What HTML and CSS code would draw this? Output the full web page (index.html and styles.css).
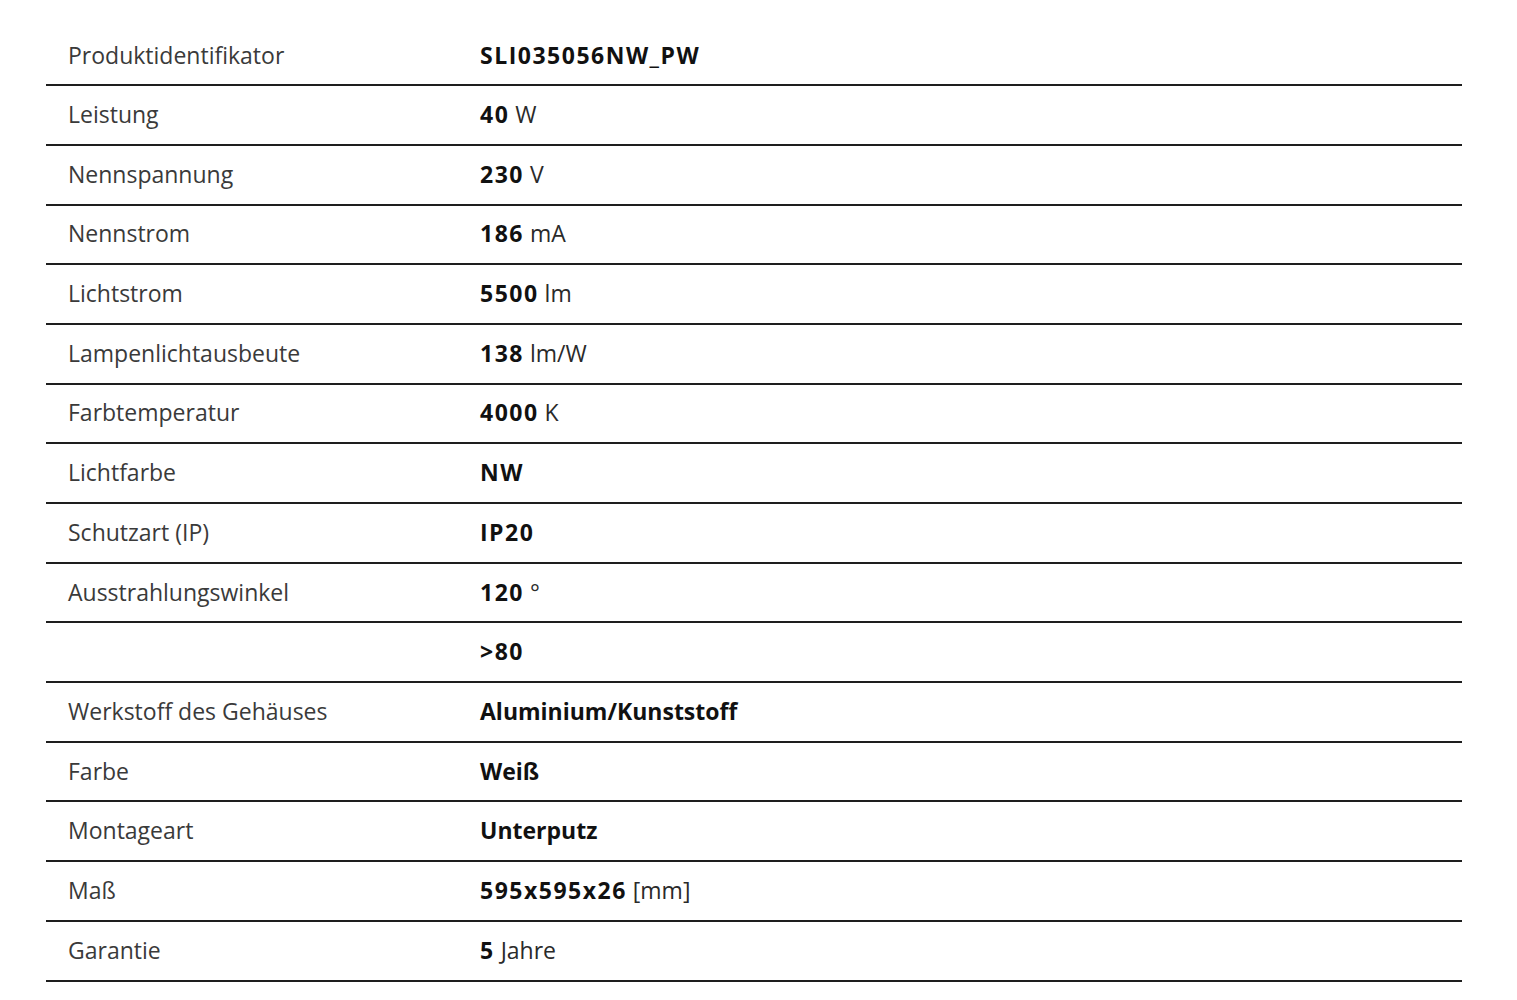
FILE: index.html
```html
<!DOCTYPE html>
<html lang="de">
<head>
<meta charset="utf-8">
<link rel="stylesheet" href="styles.css">
<title>Produktdaten</title>
</head>
<body>
<table class="specs">
  <tbody>
    <tr class="first"><td class="label">Produktidentifikator</td><td class="value"><b class="n">SLI035056NW_PW</b></td></tr>
    <tr><td class="label">Leistung</td><td class="value"><b class="n">40</b> W</td></tr>
    <tr><td class="label">Nennspannung</td><td class="value"><b class="n">230</b> V</td></tr>
    <tr><td class="label">Nennstrom</td><td class="value"><b class="n">186</b> mA</td></tr>
    <tr><td class="label">Lichtstrom</td><td class="value"><b class="n">5500</b> lm</td></tr>
    <tr><td class="label">Lampenlichtausbeute</td><td class="value"><b class="n">138</b> lm/W</td></tr>
    <tr><td class="label">Farbtemperatur</td><td class="value"><b class="n">4000</b> K</td></tr>
    <tr><td class="label">Lichtfarbe</td><td class="value"><b class="n">NW</b></td></tr>
    <tr><td class="label">Schutzart (IP)</td><td class="value"><b class="n">IP20</b></td></tr>
    <tr><td class="label">Ausstrahlungswinkel</td><td class="value"><b class="n">120</b> °</td></tr>
    <tr><td class="label"></td><td class="value"><b class="n">&gt;80</b></td></tr>
    <tr><td class="label">Werkstoff des Gehäuses</td><td class="value"><b>Aluminium/Kunststoff</b></td></tr>
    <tr><td class="label">Farbe</td><td class="value"><b>Weiß</b></td></tr>
    <tr><td class="label">Montageart</td><td class="value"><b>Unterputz</b></td></tr>
    <tr><td class="label">Maß</td><td class="value"><b class="n">595x595x26</b> [mm]</td></tr>
    <tr><td class="label">Garantie</td><td class="value"><b class="n">5</b> Jahre</td></tr>
  </tbody>
</table>
</body>
</html>
```
FILE: styles.css
```css
html, body {
  margin: 0;
  padding: 0;
  background: #ffffff;
}
body {
  padding: 27px 55px 0 46px;
  font-family: "Open Sans", Lato, sans-serif;
  color: #333;
}
.specs {
  width: 1416px;
  border-collapse: collapse;
}
.specs td {
  height: 56.7px;
  padding: 0 0 1px 0;
  border-bottom: 2px solid #1e1e1e;
  vertical-align: middle;
  font-size: 23px;
  line-height: 1;
}
.specs tr.first td {
  height: 56.2px;
}
.label {
  width: 412px;
  padding-left: 22px !important;
  color: #3a3a3a;
}
.value {
  color: #2a2a2a;
}
.value b {
  font-weight: 700;
  color: #111;
}
.value b.n {
  letter-spacing: 1.5px;
}
```
